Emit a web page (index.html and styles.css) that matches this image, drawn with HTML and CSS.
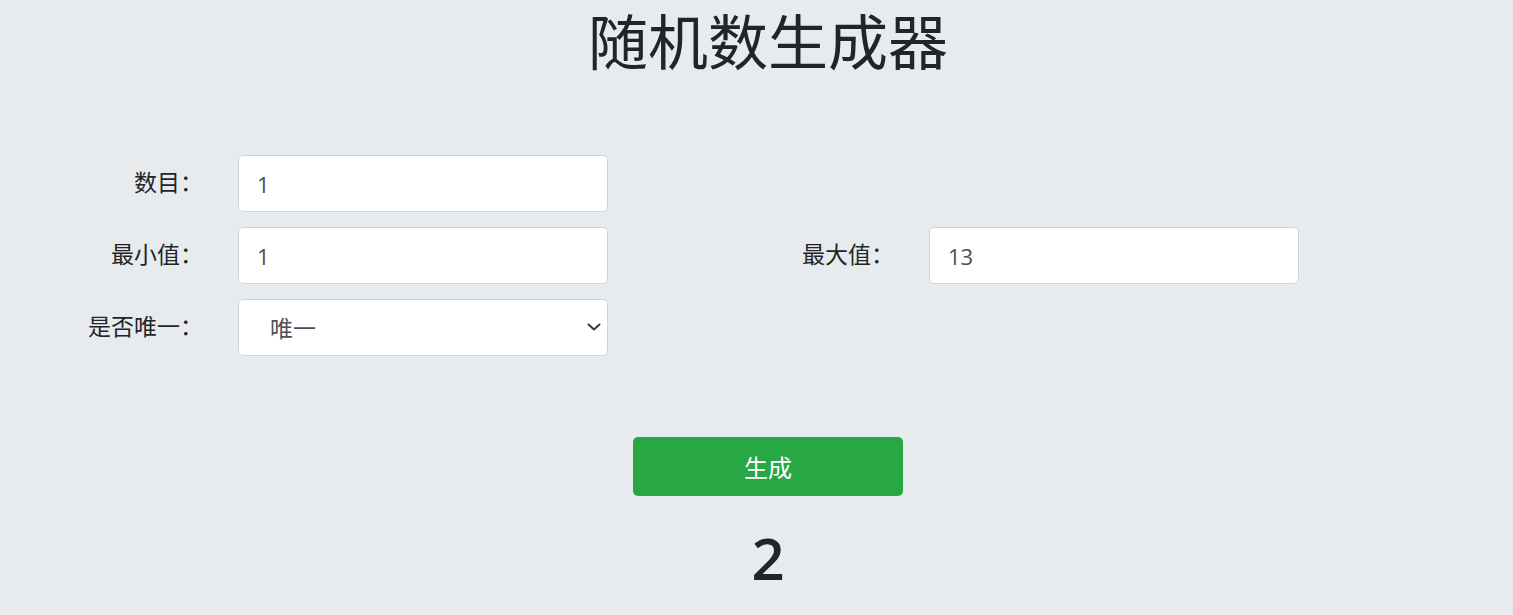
FILE: index.html
```html
<!DOCTYPE html>
<html lang="zh-CN">
<head>
    <meta charset="UTF-8">
    <meta name="viewport" content="width=device-width, initial-scale=1.0">
    <title>随机数生成器</title>
    <link rel="stylesheet" href="styles.css">
</head>
<body>
    <div class="page">
        <h1 class="title">随机数生成器</h1>
        <form class="form">
            <div class="field">
                <label for="count">数目：</label>
                <input id="count" type="text" value="1">
            </div>
            <div class="field"></div>
            <div class="field">
                <label for="min">最小值：</label>
                <input id="min" type="text" value="1">
            </div>
            <div class="field">
                <label for="max">最大值：</label>
                <input id="max" type="text" value="13">
            </div>
            <div class="field">
                <label for="unique">是否唯一：</label>
                <div class="select-box">
                    <select id="unique">
                        <option>唯一</option>
                        <option>不唯一</option>
                    </select>
                    <svg class="arrow" width="14" height="8" viewBox="0 0 14 8">
                        <path d="M1.5 1.5 L7 6.5 L12.5 1.5" fill="none" stroke="#343a40" stroke-width="2" stroke-linecap="round" stroke-linejoin="round"/>
                    </svg>
                </div>
            </div>
        </form>
        <div class="actions">
            <button class="btn" type="button">生成</button>
        </div>
        <div class="result">2</div>
    </div>
</body>
</html>
```

FILE: styles.css
```css
body{
    margin: 0;
    padding: 0;
    background-color: #e8ebee;
    color: #212529;
    font-family: "Open Sans", "Noto Sans CJK SC", sans-serif;
}
.page{
    padding-left: 23px;
}
.title{
    margin: 6px 0 0;
    font-size: 60px;
    line-height: 72px;
    font-weight: 400;
    text-align: center;
}
.form{
    width: 1382px;
    margin: 77px auto 0;
    display: grid;
    grid-template-columns: 691px 691px;
    row-gap: 15px;
}
.field{
    display: grid;
    grid-template-columns: 161px 370px;
    align-items: center;
}
.field label{
    text-align: right;
    padding-right: 35px;
    padding-bottom: 6px;
    font-size: 23px;
    text-spacing-trim: space-all;
}
.field input,
.field select{
    box-sizing: border-box;
    width: 370px;
    height: 57px;
    border: 1px solid #ced4da;
    border-radius: 5px;
    background-color: #fff;
    color: #495057;
    font-family: "Open Sans", "Noto Sans CJK SC", sans-serif;
    font-size: 22px;
    padding: 0 18px;
    outline: none;
}
.select-box{
    position: relative;
    width: 370px;
}
.field select{
    appearance: none;
    -webkit-appearance: none;
    padding-left: 31px;
    font-size: 23px;
}
.arrow{
    position: absolute;
    right: 7px;
    top: 24px;
    pointer-events: none;
}
.actions{
    margin-top: 81px;
    text-align: center;
}
.btn{
    width: 270px;
    height: 59px;
    border: none;
    border-radius: 5px;
    background-color: #28a745;
    color: #fff;
    font-family: "Open Sans", "Noto Sans CJK SC", sans-serif;
    font-size: 24px;
    cursor: pointer;
}
.result{
    margin-top: 26px;
    text-align: center;
    font-size: 58px;
    line-height: 72px;
    font-weight: 600;
}
```
